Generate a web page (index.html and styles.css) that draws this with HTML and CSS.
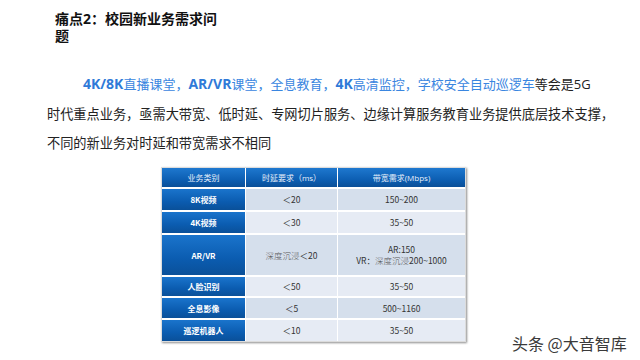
FILE: index.html
```html
<!DOCTYPE html>
<html>
<head>
<meta charset="utf-8">
<link rel="stylesheet" href="styles.css">
</head>
<body>
<div class="page">
  <h1 class="title">痛点<span class="lat">2</span>：校园新业务需求问题</h1>
  <p class="para"><span class="l1"><span class="hl"><b>4K/8K</b>直播课堂，<b>AR/VR</b>课堂，全息教育，<b>4K</b>高清监控，学校安全自动巡逻车</span>等会是<span class="lat">5G</span></span><br>时代重点业务，亟需大带宽、低时延、专网切片服务、边缘计算服务教育业务提供底层技术支撑，<br>不同的新业务对时延和带宽需求不相同</p>
  <table class="tbl">
    <thead>
      <tr><th class="c1">业务类别</th><th class="c2">时延要求（<span class="lat">ms</span>）</th><th class="c3">带宽需求<span class="lat">(Mbps)</span></th></tr>
    </thead>
    <tbody>
      <tr class="odd h21"><th>8K视频</th><td>＜20</td><td>150~200</td></tr>
      <tr class="even h21"><th>4K视频</th><td>＜30</td><td>35~50</td></tr>
      <tr class="odd h40"><th>AR/VR</th><td><span class="song">深度沉浸</span>＜20</td><td>AR:150<br>VR：<span class="song">深度沉浸</span>200~1000</td></tr>
      <tr class="even h19"><th>人脸识别</th><td>＜50</td><td>35~50</td></tr>
      <tr class="odd h20"><th>全息影像</th><td>＜5</td><td>500~1160</td></tr>
      <tr class="even last"><th>巡逻机器人</th><td>＜10</td><td>35~50</td></tr>
    </tbody>
  </table>
  <div class="mark">头条 @大音智库</div>
</div>
</body>
</html>
```

FILE: styles.css
```css
* { box-sizing: border-box; }
html, body { margin: 0; padding: 0; background: #fff; }
.page {
  position: relative;
  width: 640px;
  height: 360px;
  overflow: hidden;
  padding-top: 10px;
  font-family: "Noto Sans CJK SC", sans-serif;
  color: #1a1a1a;
}
.lat { font-family: "Open Sans", "Noto Sans CJK SC", sans-serif; }
.title {
  margin: 0 0 0 55px;
  width: 168px;
  font-size: 14px;
  line-height: 17px;
  font-weight: 700;
  color: #111;
}
.para {
  margin: 25px 0 0 47px;
  width: 593px;
  font-size: 13.2px;
  line-height: 29px;
  text-indent: 36px;
  color: #222;
  font-weight: 400;
  white-space: nowrap;
}
.l1 { font-size: 13px; }
.hl { color: #3a86e0; }
.hl b { font-family: "Open Sans", sans-serif; font-weight: 700; font-size: 14px; color: #2f7ad8; }
.tbl {
  margin: 10px 0 0 161px;
  width: 305px;
  border-collapse: separate;
  border-spacing: 0;
  font-size: 8px;
  box-shadow: 1px 1px 2px rgba(0,0,0,0.45);
  border: 1px solid #dcdcdc;
}
.tbl th, .tbl td {
  text-align: center;
  padding: 0;
  border-right: 1px solid #fff;
  border-bottom: 2px solid #fff;
  line-height: 11px;
}
.tbl th:last-child, .tbl td:last-child { border-right: 0; }
.tbl thead th {
  height: 21px;
  color: #e8f0fa;
  font-weight: 400;
  background: linear-gradient(#1e78cf, #0d5fb3 60%, #0a4f98);
}
.c1 { width: 84px; }
.c2 { width: 92px; }
.tbl tbody th {
  color: #fff;
  font-weight: 700;
  background: linear-gradient(#1a74cc, #0b5cb0 60%, #0a5099);
}
.tbl tbody td { color: #333; font-size: 8.5px; }
.odd td { background: #d5dfec; }
.even td { background: #e6ebf4; }
.h21 th, .h21 td { height: 23px; }
.h40 th, .h40 td { height: 42px; }
.h19 th, .h19 td { height: 21px; }
.h20 th, .h20 td { height: 22px; }
.last th, .last td { border-bottom: 0; height: 21px; }
.song { color: #555; font-weight: 300; }
.mark {
  position: absolute;
  left: 512px;
  top: 334px;
  font-size: 16px;
  line-height: 18px;
  color: #3a3a3a;
  text-shadow: 0 0 2px #fff;
}
```
